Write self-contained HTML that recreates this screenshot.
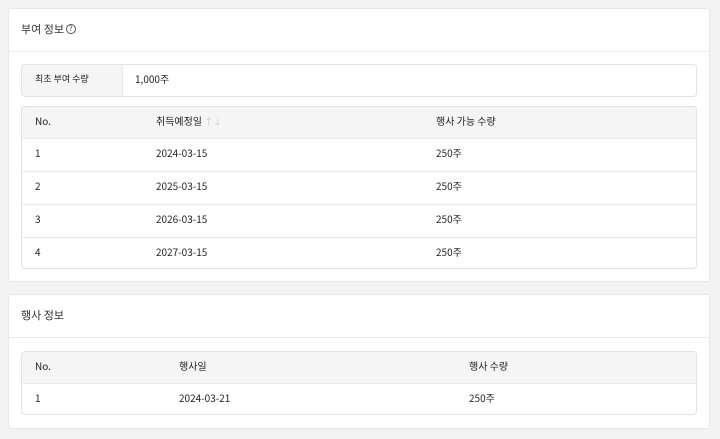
<html><head><style>
body{margin:0;background:#f3f3f3;font-family:"Noto Sans CJK KR",sans-serif;color:#222;font-size:10px;}
.card{position:absolute;left:8px;width:702px;background:#fff;border:1px solid #e8e8e8;border-radius:3px;box-sizing:border-box}
.title{position:absolute;left:12px;font-size:11px;line-height:14px;color:#333}
.hr{position:absolute;left:0;right:0;height:1px;background:#ebebeb}
.box{position:absolute;left:12px;right:12px;border:1px solid #e3e3e3;border-radius:4px;overflow:hidden;box-sizing:border-box}
.row{position:absolute;left:0;right:0;border-top:1px solid #e8e8e8}
.hd{background:#f5f5f5;border-top:none}
.c{position:absolute;top:50%;margin-top:-9px;height:14px;line-height:14px;white-space:nowrap}
</style></head><body>
<div class="card" style="top:8px;height:274px">
 <div class="title" style="top:13px">부여 정보<span style="display:inline-block;width:8px;height:8px;border:1px solid #555;border-radius:50%;font-size:7px;line-height:8px;text-align:center;margin-left:2px;vertical-align:middle;position:relative;top:-1px">?</span></div>
 <div class="hr" style="top:42px"></div>
 <div class="box" style="top:55px;height:33px">
  <div style="position:absolute;left:0;top:0;bottom:0;width:100px;background:#f5f5f5;border-right:1px solid #e8e8e8"></div>
  <div class="c" style="left:13px;font-size:9px">최초 부여 수량</div>
  <div class="c" style="left:113px">1,000주</div>
 </div>
 <div class="box" style="top:97px;height:163px">
  <div class="row hd" style="top:0;height:31px"><div class="c" style="left:13px">No.</div><div class="c" style="left:134px">취득예정일 <span style="color:#ccc;font-size:9px">↑↓</span></div><div class="c" style="left:414px">행사 가능 수량</div></div>
  <div class="row" style="top:31px;height:32px"><div class="c" style="left:13px">1</div><div class="c" style="left:134px">2024-03-15</div><div class="c" style="left:414px">250주</div></div>
  <div class="row" style="top:64px;height:32px"><div class="c" style="left:13px">2</div><div class="c" style="left:134px">2025-03-15</div><div class="c" style="left:414px">250주</div></div>
  <div class="row" style="top:97px;height:32px"><div class="c" style="left:13px">3</div><div class="c" style="left:134px">2026-03-15</div><div class="c" style="left:414px">250주</div></div>
  <div class="row" style="top:130px;height:32px"><div class="c" style="left:13px">4</div><div class="c" style="left:134px">2027-03-15</div><div class="c" style="left:414px">250주</div></div>
 </div>
</div>
<div class="card" style="top:294px;height:135px">
 <div class="title" style="top:13px">행사 정보</div>
 <div class="hr" style="top:42px"></div>
 <div class="box" style="top:56px;height:64px">
  <div class="row hd" style="top:0;height:31px"><div class="c" style="left:13px">No.</div><div class="c" style="left:157px">행사일</div><div class="c" style="left:447px">행사 수량</div></div>
  <div class="row" style="top:31px;height:32px"><div class="c" style="left:13px">1</div><div class="c" style="left:157px">2024-03-21</div><div class="c" style="left:447px">250주</div></div>
 </div>
</div>
</body></html>
